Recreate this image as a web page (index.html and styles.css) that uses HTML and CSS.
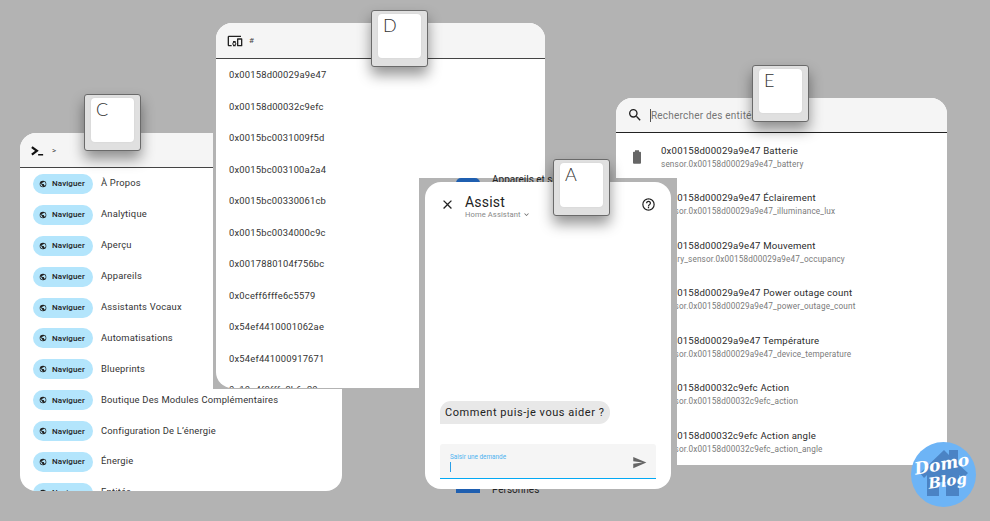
FILE: index.html
```html
<!DOCTYPE html>
<html lang="fr">
<head>
<meta charset="utf-8">
<title>Raccourcis Home Assistant</title>
<link rel="stylesheet" href="styles.css">
</head>
<body>
<section class="win win-c">
  <header class="win-head">
    <svg class="ico ico-term" viewBox="0 0 24 24"><path d="M3 6.5 L11 12.5 L3 18.500" fill="none" stroke="#111" stroke-width="3.600"/><path d="M13 17.500H21V20H13Z" fill="#111"/></svg>
    <span class="head-mark">&gt;</span>
  </header>
  <ul class="nav-list">
    <li class="nav-row"><span class="chip"><svg class="ico-earth" viewBox="0 0 24 24"><path d="M17.9,17.39C17.64,16.59 16.89,16 16,16H15V13A1,1 0 0,0 14,12H8V10H10A1,1 0 0,0 11,9V7H13A2,2 0 0,0 15,5V4.59C17.93,5.77 20,8.64 20,12C20,14.08 19.2,15.97 17.9,17.39M11,19.93C7.05,19.44 4,16.08 4,12C4,11.38 4.08,10.78 4.21,10.21L9,15V16A2,2 0 0,0 11,18M12,2A10,10 0 0,0 2,12A10,10 0 0,0 12,22A10,10 0 0,0 22,12A10,10 0 0,0 12,2Z"/></svg>Naviguer</span><span class="nav-label">À Propos</span></li>
    <li class="nav-row"><span class="chip"><svg class="ico-earth" viewBox="0 0 24 24"><path d="M17.9,17.39C17.64,16.59 16.89,16 16,16H15V13A1,1 0 0,0 14,12H8V10H10A1,1 0 0,0 11,9V7H13A2,2 0 0,0 15,5V4.59C17.93,5.77 20,8.64 20,12C20,14.08 19.2,15.97 17.9,17.39M11,19.93C7.05,19.44 4,16.08 4,12C4,11.38 4.08,10.78 4.21,10.21L9,15V16A2,2 0 0,0 11,18M12,2A10,10 0 0,0 2,12A10,10 0 0,0 12,22A10,10 0 0,0 22,12A10,10 0 0,0 12,2Z"/></svg>Naviguer</span><span class="nav-label">Analytique</span></li>
    <li class="nav-row"><span class="chip"><svg class="ico-earth" viewBox="0 0 24 24"><path d="M17.9,17.39C17.64,16.59 16.89,16 16,16H15V13A1,1 0 0,0 14,12H8V10H10A1,1 0 0,0 11,9V7H13A2,2 0 0,0 15,5V4.59C17.93,5.77 20,8.64 20,12C20,14.08 19.2,15.97 17.9,17.39M11,19.93C7.05,19.44 4,16.08 4,12C4,11.38 4.08,10.78 4.21,10.21L9,15V16A2,2 0 0,0 11,18M12,2A10,10 0 0,0 2,12A10,10 0 0,0 12,22A10,10 0 0,0 22,12A10,10 0 0,0 12,2Z"/></svg>Naviguer</span><span class="nav-label">Aperçu</span></li>
    <li class="nav-row"><span class="chip"><svg class="ico-earth" viewBox="0 0 24 24"><path d="M17.9,17.39C17.64,16.59 16.89,16 16,16H15V13A1,1 0 0,0 14,12H8V10H10A1,1 0 0,0 11,9V7H13A2,2 0 0,0 15,5V4.59C17.93,5.77 20,8.64 20,12C20,14.08 19.2,15.97 17.9,17.39M11,19.93C7.05,19.44 4,16.08 4,12C4,11.38 4.08,10.78 4.21,10.21L9,15V16A2,2 0 0,0 11,18M12,2A10,10 0 0,0 2,12A10,10 0 0,0 12,22A10,10 0 0,0 22,12A10,10 0 0,0 12,2Z"/></svg>Naviguer</span><span class="nav-label">Appareils</span></li>
    <li class="nav-row"><span class="chip"><svg class="ico-earth" viewBox="0 0 24 24"><path d="M17.9,17.39C17.64,16.59 16.89,16 16,16H15V13A1,1 0 0,0 14,12H8V10H10A1,1 0 0,0 11,9V7H13A2,2 0 0,0 15,5V4.59C17.93,5.77 20,8.64 20,12C20,14.08 19.2,15.97 17.9,17.39M11,19.93C7.05,19.44 4,16.08 4,12C4,11.38 4.08,10.78 4.21,10.21L9,15V16A2,2 0 0,0 11,18M12,2A10,10 0 0,0 2,12A10,10 0 0,0 12,22A10,10 0 0,0 22,12A10,10 0 0,0 12,2Z"/></svg>Naviguer</span><span class="nav-label">Assistants Vocaux</span></li>
    <li class="nav-row"><span class="chip"><svg class="ico-earth" viewBox="0 0 24 24"><path d="M17.9,17.39C17.64,16.59 16.89,16 16,16H15V13A1,1 0 0,0 14,12H8V10H10A1,1 0 0,0 11,9V7H13A2,2 0 0,0 15,5V4.59C17.93,5.77 20,8.64 20,12C20,14.08 19.2,15.97 17.9,17.39M11,19.93C7.05,19.44 4,16.08 4,12C4,11.38 4.08,10.78 4.21,10.21L9,15V16A2,2 0 0,0 11,18M12,2A10,10 0 0,0 2,12A10,10 0 0,0 12,22A10,10 0 0,0 22,12A10,10 0 0,0 12,2Z"/></svg>Naviguer</span><span class="nav-label">Automatisations</span></li>
    <li class="nav-row"><span class="chip"><svg class="ico-earth" viewBox="0 0 24 24"><path d="M17.9,17.39C17.64,16.59 16.89,16 16,16H15V13A1,1 0 0,0 14,12H8V10H10A1,1 0 0,0 11,9V7H13A2,2 0 0,0 15,5V4.59C17.93,5.77 20,8.64 20,12C20,14.08 19.2,15.97 17.9,17.39M11,19.93C7.05,19.44 4,16.08 4,12C4,11.38 4.08,10.78 4.21,10.21L9,15V16A2,2 0 0,0 11,18M12,2A10,10 0 0,0 2,12A10,10 0 0,0 12,22A10,10 0 0,0 22,12A10,10 0 0,0 12,2Z"/></svg>Naviguer</span><span class="nav-label">Blueprints</span></li>
    <li class="nav-row"><span class="chip"><svg class="ico-earth" viewBox="0 0 24 24"><path d="M17.9,17.39C17.64,16.59 16.89,16 16,16H15V13A1,1 0 0,0 14,12H8V10H10A1,1 0 0,0 11,9V7H13A2,2 0 0,0 15,5V4.59C17.93,5.77 20,8.64 20,12C20,14.08 19.2,15.97 17.9,17.39M11,19.93C7.05,19.44 4,16.08 4,12C4,11.38 4.08,10.78 4.21,10.21L9,15V16A2,2 0 0,0 11,18M12,2A10,10 0 0,0 2,12A10,10 0 0,0 12,22A10,10 0 0,0 22,12A10,10 0 0,0 12,2Z"/></svg>Naviguer</span><span class="nav-label">Boutique Des Modules Complémentaires</span></li>
    <li class="nav-row"><span class="chip"><svg class="ico-earth" viewBox="0 0 24 24"><path d="M17.9,17.39C17.64,16.59 16.89,16 16,16H15V13A1,1 0 0,0 14,12H8V10H10A1,1 0 0,0 11,9V7H13A2,2 0 0,0 15,5V4.59C17.93,5.77 20,8.64 20,12C20,14.08 19.2,15.97 17.9,17.39M11,19.93C7.05,19.44 4,16.08 4,12C4,11.38 4.08,10.78 4.21,10.21L9,15V16A2,2 0 0,0 11,18M12,2A10,10 0 0,0 2,12A10,10 0 0,0 12,22A10,10 0 0,0 22,12A10,10 0 0,0 12,2Z"/></svg>Naviguer</span><span class="nav-label">Configuration De L’énergie</span></li>
    <li class="nav-row"><span class="chip"><svg class="ico-earth" viewBox="0 0 24 24"><path d="M17.9,17.39C17.64,16.59 16.89,16 16,16H15V13A1,1 0 0,0 14,12H8V10H10A1,1 0 0,0 11,9V7H13A2,2 0 0,0 15,5V4.59C17.93,5.77 20,8.64 20,12C20,14.08 19.2,15.97 17.9,17.39M11,19.93C7.05,19.44 4,16.08 4,12C4,11.38 4.08,10.78 4.21,10.21L9,15V16A2,2 0 0,0 11,18M12,2A10,10 0 0,0 2,12A10,10 0 0,0 12,22A10,10 0 0,0 22,12A10,10 0 0,0 12,2Z"/></svg>Naviguer</span><span class="nav-label">Énergie</span></li>
    <li class="nav-row"><span class="chip"><svg class="ico-earth" viewBox="0 0 24 24"><path d="M17.9,17.39C17.64,16.59 16.89,16 16,16H15V13A1,1 0 0,0 14,12H8V10H10A1,1 0 0,0 11,9V7H13A2,2 0 0,0 15,5V4.59C17.93,5.77 20,8.64 20,12C20,14.08 19.2,15.97 17.9,17.39M11,19.93C7.05,19.44 4,16.08 4,12C4,11.38 4.08,10.78 4.21,10.21L9,15V16A2,2 0 0,0 11,18M12,2A10,10 0 0,0 2,12A10,10 0 0,0 12,22A10,10 0 0,0 22,12A10,10 0 0,0 12,2Z"/></svg>Naviguer</span><span class="nav-label">Entités</span></li>
  </ul>
</section>

<div class="scrim-d">
  <section class="win win-d">
    <header class="win-head">
      <svg class="ico ico-dev" viewBox="0 0 24 24"><path d="M3 6H21V4H3C1.9 4 1 4.9 1 6V18C1 19.1 1.9 20 3 20H7V18H3V6M13 12H9V13.78C8.39 14.33 8 15.11 8 16C8 16.89 8.39 17.67 9 18.22V20H13V18.22C13.61 17.67 14 16.88 14 16S13.61 14.33 13 13.78V12M11 17.5C10.17 17.5 9.5 16.83 9.5 16S10.17 14.5 11 14.5 12.5 15.17 12.5 16 11.83 17.5 11 17.5M22 8H16C15.5 8 15 8.5 15 9V19C15 19.5 15.5 20 16 20H22C22.5 20 23 19.5 23 19V9C23 8.5 22.5 8 22 8M21 18H17V10H21V18Z"/></svg>
      <span class="head-mark">#</span>
    </header>
    <ul class="dev-list">
      <li class="dev-row">0x00158d00029a9e47</li>
      <li class="dev-row">0x00158d00032c9efc</li>
      <li class="dev-row">0x0015bc0031009f5d</li>
      <li class="dev-row">0x0015bc003100a2a4</li>
      <li class="dev-row">0x0015bc00330061cb</li>
      <li class="dev-row">0x0015bc0034000c9c</li>
      <li class="dev-row">0x0017880104f756bc</li>
      <li class="dev-row">0x0ceff6fffe6c5579</li>
      <li class="dev-row">0x54ef4410001062ae</li>
      <li class="dev-row">0x54ef441000917671</li>
      <li class="dev-row">0x10a4f8fffe3b6c20</li>
    </ul>
  </section>
</div>

<section class="win win-e">
  <header class="win-head">
    <svg class="ico ico-search" viewBox="0 0 24 24"><path d="M9.5,3A6.5,6.5 0 0,1 16,9.5C16,11.11 15.41,12.59 14.44,13.73L14.71,14H15.5L20.5,19L19,20.5L14,15.5V14.71L13.73,14.44C12.59,15.41 11.11,16 9.5,16A6.5,6.5 0 0,1 3,9.5A6.5,6.5 0 0,1 9.5,3M9.5,5C7,5 5,7 5,9.5C5,12 7,14 9.5,14C12,14 14,12 14,9.5C14,7 12,5 9.5,5Z"/></svg>
    <span class="search-field">Rechercher des entités</span>
  </header>
  <ul class="ent-list">
    <li class="ent-row"><svg class="ico-batt" viewBox="0 0 24 24"><path d="M16.67,4H15V2H9V4H7.33A1.33,1.33 0 0,0 6,5.33V20.67C6,21.4 6.6,22 7.33,22H16.67A1.33,1.33 0 0,0 18,20.67V5.33C18,4.6 17.4,4 16.67,4Z"/></svg><div class="ent-text"><p class="ent-name">0x00158d00029a9e47 Batterie</p><p class="ent-id">sensor.0x00158d00029a9e47_battery</p></div></li>
    <li class="ent-row"><svg class="ico-batt" viewBox="0 0 24 24"></svg><div class="ent-text"><p class="ent-name">0x00158d00029a9e47 Éclairement</p><p class="ent-id">sensor.0x00158d00029a9e47_illuminance_lux</p></div></li>
    <li class="ent-row"><svg class="ico-batt" viewBox="0 0 24 24"></svg><div class="ent-text"><p class="ent-name">0x00158d00029a9e47 Mouvement</p><p class="ent-id">binary_sensor.0x00158d00029a9e47_occupancy</p></div></li>
    <li class="ent-row"><svg class="ico-batt" viewBox="0 0 24 24"></svg><div class="ent-text"><p class="ent-name">0x00158d00029a9e47 Power outage count</p><p class="ent-id">sensor.0x00158d00029a9e47_power_outage_count</p></div></li>
    <li class="ent-row"><svg class="ico-batt" viewBox="0 0 24 24"></svg><div class="ent-text"><p class="ent-name">0x00158d00029a9e47 Température</p><p class="ent-id">sensor.0x00158d00029a9e47_device_temperature</p></div></li>
    <li class="ent-row"><svg class="ico-batt" viewBox="0 0 24 24"></svg><div class="ent-text"><p class="ent-name">0x00158d00032c9efc Action</p><p class="ent-id">sensor.0x00158d00032c9efc_action</p></div></li>
    <li class="ent-row"><svg class="ico-batt" viewBox="0 0 24 24"></svg><div class="ent-text"><p class="ent-name">0x00158d00032c9efc Action angle</p><p class="ent-id">sensor.0x00158d00032c9efc_action_angle</p></div></li>
  </ul>
</section>

<div class="scrim-a">
  <span class="ghost ghost-top">Appareils et services</span>
  <span class="ghost-icon ghost-icon-top"></span>
  <span class="ghost ghost-bottom">Personnes</span>
  <span class="ghost-icon ghost-icon-bottom"></span>
  <section class="assist">
    <header class="assist-head">
      <svg class="ico-close" viewBox="0 0 24 24"><path d="M19,6.41L17.59,5L12,10.59L6.41,5L5,6.41L10.59,12L5,17.59L6.41,19L12,13.41L17.59,19L19,17.59L13.41,12L19,6.41Z"/></svg>
      <div class="assist-title">
        <h1>Assist</h1>
        <p>Home Assistant <svg class="ico-chev" viewBox="0 0 24 24"><path d="M7.41,8.58L12,13.17L16.59,8.58L18,10L12,16L6,10L7.41,8.58Z"/></svg></p>
      </div>
      <svg class="ico-help" viewBox="0 0 24 24"><path d="M11,18H13V16H11V18M12,2A10,10 0 0,0 2,12A10,10 0 0,0 12,22A10,10 0 0,0 22,12A10,10 0 0,0 12,2M12,20C7.59,20 4,16.41 4,12C4,7.59 7.59,4 12,4C16.41,4 20,7.59 20,12C20,16.41 16.41,20 12,20M12,6A4,4 0 0,0 8,10H10A2,2 0 0,1 12,8A2,2 0 0,1 14,10C14,12 11,11.75 11,15H13C13,12.75 16,12.5 16,10A4,4 0 0,0 12,6Z"/></svg>
    </header>
    <div class="assist-body"><p class="bubble">Comment puis-je vous aider ?</p></div>
    <div class="prompt">
      <div class="prompt-field"><span class="prompt-label">Saisir une demande</span><span class="caret"></span></div>
      <svg class="ico-send" viewBox="0 0 24 24"><path d="M2,21L23,12L2,3V10L17,12L2,14V21Z"/></svg>
    </div>
  </section>
</div>

<div class="key key-c"><div class="cap">C</div></div>
<div class="key key-d"><div class="cap">D</div></div>
<div class="key key-a"><div class="cap">A</div></div>
<div class="key key-e"><div class="cap">E</div></div>

<div class="logo">
  <svg class="logo-house" viewBox="0 0 65 65"><path d="M9 31 L33 8 L38 13 V8 H47 V22 L57 31 L52 36 L48 33 V54 H35 V40 H28 V54 H16 V33 L13 36 Z"/></svg>
  <span class="logo-domo">Domo</span>
  <span class="logo-blog">Blog</span>
</div>
</body>
</html>
```

FILE: styles.css
```css
* { box-sizing: border-box; }
html, body { margin: 0; padding: 0; }
body {
  position: relative;
  width: 990px;
  height: 521px;
  overflow: hidden;
  background: #b3b3b3;
  font-family: Roboto, "Liberation Sans", sans-serif;
  color: #2b2b2b;
}
ul { list-style: none; margin: 0; padding: 0; }
p, h1 { margin: 0; font-weight: 400; }

.win {
  position: absolute;
  background: #fff;
  border-radius: 16px;
  overflow: hidden;
}
.win-c { left: 20px; top: 133px; width: 322px; height: 358px; }
.win-d { left: 3px; top: 3px; width: 329px; height: 365px; }
.win-e { left: 616px; top: 98px; width: 331px; height: 367px; }

.scrim-d {
  position: absolute;
  left: 213px;
  top: 20px;
  width: 340px;
  height: 369px;
  background: #b3b3b3;
  overflow: hidden;
}

.win-head {
  display: flex;
  align-items: center;
  height: 35px;
  background: #f5f5f5;
  border-bottom: 1px solid #444;
}
.win-c .win-head { padding-left: 10px; gap: 7px; }
.win-d .win-head { padding-left: 11px; gap: 6px; height: 36px; }
.win-e .win-head { padding-left: 11px; gap: 7px; border-bottom-color: #222; }

.ico { display: block; flex: none; fill: #222; }
.ico-term { width: 15px; height: 15px; }
.ico-dev { width: 16px; height: 16px; }
.ico-search { width: 16px; height: 16px; }
.head-mark { font-size: 8px; color: #444; }

.search-field {
  font-size: 10px;
  letter-spacing: 0.2px;
  color: #757575;
  line-height: 13px;
  border-left: 1px solid #555;
}

.nav-row {
  display: flex;
  align-items: center;
  height: 30.9px;
  padding-left: 13px;
  padding-top: 1px;
}
.chip {
  display: flex;
  align-items: center;
  flex: none;
  gap: 5px;
  width: 60px;
  height: 20px;
  padding-left: 6px;
  border-radius: 10px;
  background: #b3e5fc;
  font-size: 8px;
  font-weight: 500;
  letter-spacing: 0.1px;
  color: #222;
}
.ico-earth { width: 8px; height: 8px; fill: #222; flex: none; }
.nav-label {
  margin: -2px 0 0 8px;
  font-size: 9.4px;
  letter-spacing: 0.2px;
  color: #333;
  white-space: nowrap;
}

.dev-row {
  display: flex;
  align-items: center;
  height: 31.5px;
  padding-left: 13px;
  font-size: 9.4px;
  letter-spacing: 0.2px;
  color: #333;
}

.ent-row {
  display: flex;
  align-items: center;
  height: 47.5px;
  padding-left: 13px;
}
.ico-batt { width: 16px; height: 16px; flex: none; fill: #666; }
.ent-text { margin-left: 16px; }
.ent-name {
  font-size: 9.6px;
  line-height: 13px;
  letter-spacing: 0.2px;
  color: #2b2b2b;
  white-space: nowrap;
}
.ent-id {
  margin-top: 2px;
  font-size: 8.2px;
  line-height: 11px;
  letter-spacing: 0.15px;
  color: #7a7a7a;
  white-space: nowrap;
}

.scrim-a {
  position: absolute;
  left: 419px;
  top: 178px;
  width: 258px;
  height: 343px;
  background: #b3b3b3;
}
.ghost {
  position: absolute;
  left: 73px;
  font-size: 10px;
  color: #222;
  white-space: nowrap;
}
.ghost-top { top: -4px; }
.ghost-bottom { top: 306px; }
.ghost-icon {
  position: absolute;
  left: 37px;
  width: 24px;
  height: 8px;
  background: #1f5fb0;
}
.ghost-icon-top { top: 0; border-radius: 8px 8px 0 0; height: 5px; }
.ghost-icon-bottom { top: 311px; height: 4px; }

.assist {
  position: absolute;
  left: 6px;
  top: 4px;
  width: 246px;
  height: 307px;
  display: flex;
  flex-direction: column;
  background: #fff;
  border-radius: 16px;
  padding: 0 15px 10px;
}
.assist-head {
  display: flex;
  align-items: flex-start;
  padding-top: 12px;
}
.ico-close { width: 15px; height: 15px; margin: 3px 10px 0 0; fill: #222; flex: none; }
.assist-title { flex: 1; }
.assist-title h1 { font-size: 14px; line-height: 16px; letter-spacing: 0.2px; color: #222; }
.assist-title p {
  display: flex;
  align-items: center;
  gap: 1px;
  font-size: 7.6px;
  line-height: 9px;
  color: #888;
  letter-spacing: 0.1px;
}
.ico-chev { width: 9px; height: 9px; fill: #666; }
.ico-help { width: 15px; height: 15px; margin: 3px 0 0 0; fill: #222; flex: none; }
.assist-body {
  flex: 1;
  display: flex;
  align-items: flex-end;
}
.bubble {
  padding: 0 5px;
  height: 23px;
  line-height: 23px;
  font-size: 11px;
  letter-spacing: 0.55px;
  color: #222;
  background: #e8e8e8;
  border-radius: 11px 11px 11px 0;
  white-space: nowrap;
}
.prompt {
  display: flex;
  align-items: center;
  justify-content: space-between;
  height: 35px;
  margin-top: 20px;
  padding: 3px 9px 0 10px;
  background: #f5f5f5;
  border-radius: 3px 3px 0 0;
  border-bottom: 1.5px solid #03a9f4;
}
.prompt-field { display: flex; flex-direction: column; gap: 1px; }
.prompt-label { font-size: 6.4px; line-height: 8px; color: #4fb3f0; white-space: nowrap; }
.caret { display: block; width: 1px; height: 10px; background: #2a9fe8; }
.ico-send { width: 15px; height: 15px; fill: #666; }

.key {
  position: absolute;
  width: 57px;
  height: 57px;
  padding: 3px 6px 8px;
  background: #e0e0e0;
  border: 1px solid #6a6a6a;
  border-radius: 3px;
  box-shadow: 0 8px 14px rgba(0, 0, 0, 0.42);
}
.cap {
  height: 100%;
  padding: 1px 0 0 5px;
  background: #fff;
  border-radius: 4px;
  box-shadow: 0 0 2px #cfcfcf;
  font-family: Lato, "Liberation Sans", sans-serif;
  font-weight: 300;
  font-size: 18px;
  line-height: 20px;
  color: #333;
}
.key-c { left: 84px; top: 94px; }
.key-d { left: 371px; top: 10px; }
.key-a { left: 553px; top: 159px; }
.key-e { left: 752px; top: 65px; }

.logo {
  position: absolute;
  left: 911px;
  top: 442px;
  width: 65px;
  height: 65px;
  border-radius: 50%;
  background: #6db4f6;
  color: #fff;
  overflow: hidden;
}
.logo-house { display: block; width: 65px; height: 65px; fill: #4b83c4; }
.logo-domo, .logo-blog {
  position: absolute;
  font-family: "DejaVu Serif", serif;
  font-style: italic;
  font-weight: 700;
  white-space: nowrap;
}
.logo-domo { left: 3px; top: 12px; font-size: 17px; transform: rotate(-10deg); }
.logo-blog { left: 17px; top: 30px; font-size: 15px; transform: rotate(-8deg); }
```
